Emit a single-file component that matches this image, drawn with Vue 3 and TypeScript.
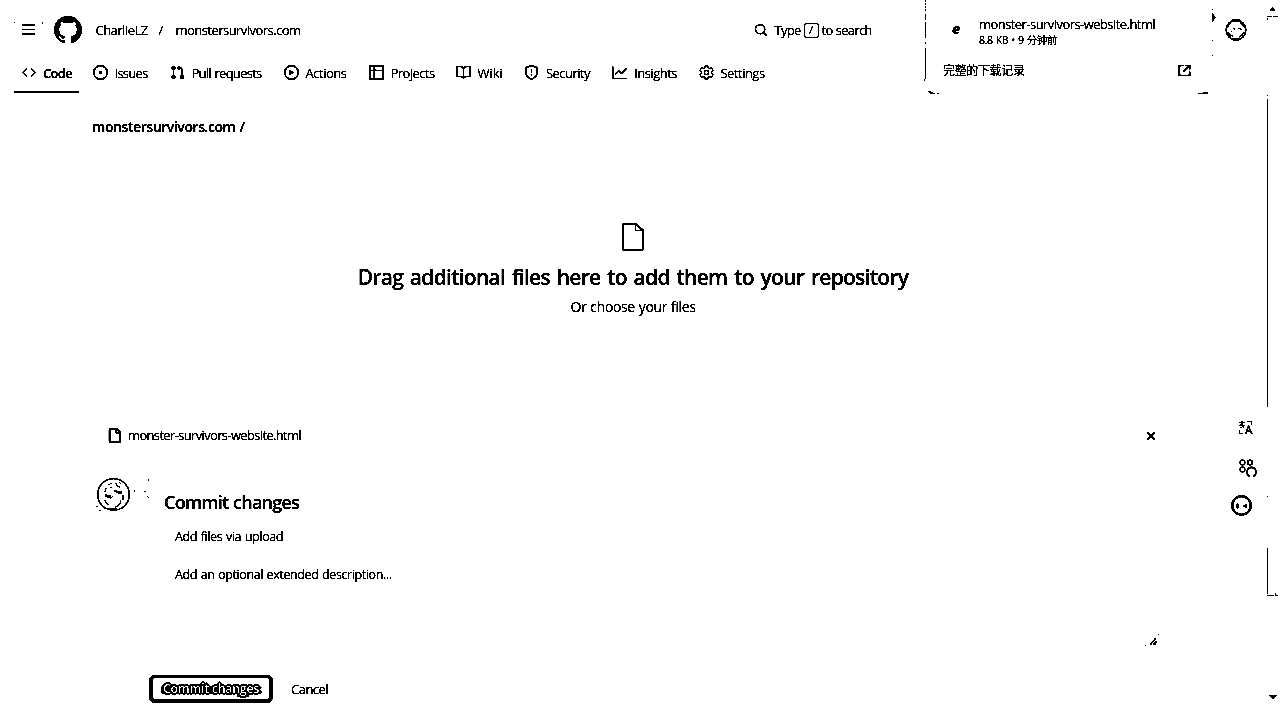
<script setup lang="ts">
interface Tab {
  label: string
  width: number
  paths: string[]
}

/* Tunes the tracking of a label so that it fills the given width. */
const vFit = {
  mounted(el: HTMLElement, binding: { value: number }) {
    const count = (el.textContent ?? '').length
    const range = document.createRange()
    range.selectNodeContents(el)
    const natural = range.getBoundingClientRect().width
    el.style.letterSpacing = `${((binding.value - 0.9 - natural) / count).toFixed(3)}px`
  },
}

const tabs: Tab[] = [
  { label: 'Code', width: 30, paths: ['m11.28 3.22 4.25 4.25a.75.75 0 0 1 0 1.06l-4.25 4.25a.749.749 0 0 1-1.275-.326.749.749 0 0 1 .215-.734L13.94 8l-3.72-3.72a.749.749 0 0 1 .326-1.275.749.749 0 0 1 .734.215Zm-6.56 0a.751.751 0 0 1 1.042.018.751.751 0 0 1 .018 1.042L2.06 8l3.72 3.72a.749.749 0 0 1-.326 1.275.749.749 0 0 1-.734-.215L.47 8.53a.75.75 0 0 1 0-1.06Z'] },
  { label: 'Issues', width: 34, paths: ['M8 9.5a1.5 1.5 0 1 0 0-3 1.5 1.5 0 0 0 0 3Z', 'M8 0a8 8 0 1 1 0 16A8 8 0 0 1 8 0ZM1.5 8a6.5 6.5 0 1 0 13 0 6.5 6.5 0 0 0-13 0Z'] },
  { label: 'Pull requests', width: 71, paths: ['M1.5 3.25a2.25 2.25 0 1 1 3 2.122v5.256a2.251 2.251 0 1 1-1.5 0V5.372A2.25 2.25 0 0 1 1.5 3.25Zm5.677-.177L9.573.677A.25.25 0 0 1 10 .854V2.5h1A2.5 2.5 0 0 1 13.5 5v5.628a2.251 2.251 0 1 1-1.5 0V5a1 1 0 0 0-1-1h-1v1.646a.25.25 0 0 1-.427.177L7.177 3.427a.25.25 0 0 1 0-.354Z'] },
  { label: 'Actions', width: 42, paths: ['M8 0a8 8 0 1 1 0 16A8 8 0 0 1 8 0ZM1.5 8a6.5 6.5 0 1 0 13 0 6.5 6.5 0 0 0-13 0Zm4.879-2.773 4.264 2.559a.25.25 0 0 1 0 .428l-4.264 2.559A.25.25 0 0 1 6 10.559V5.442a.25.25 0 0 1 .379-.215Z'] },
  { label: 'Projects', width: 45, paths: ['M0 1.75C0 .784.784 0 1.75 0h12.5C15.216 0 16 .784 16 1.75v12.5A1.75 1.75 0 0 1 14.25 16H1.75A1.75 1.75 0 0 1 0 14.25ZM6.5 6.5v8h7.75a.25.25 0 0 0 .25-.25V6.5Zm8-1.5V1.75a.25.25 0 0 0-.25-.25H6.5V5Zm-13 1.5v7.75c0 .138.112.25.25.25H5v-8ZM5 5V1.5H1.75a.25.25 0 0 0-.25.25V5Z'] },
  { label: 'Wiki', width: 26, paths: ['M0 1.75A.75.75 0 0 1 .75 1h4.253c1.227 0 2.317.59 3 1.501A3.743 3.743 0 0 1 11.006 1h4.245a.75.75 0 0 1 .75.75v10.5a.75.75 0 0 1-.75.75h-4.507a2.25 2.25 0 0 0-1.591.659l-.622.621a.75.75 0 0 1-1.06 0l-.622-.621A2.25 2.25 0 0 0 5.258 13H.75a.75.75 0 0 1-.75-.75Zm7.251 10.324.004-5.073-.002-2.253A2.25 2.25 0 0 0 5.003 2.5H1.5v9h3.757a3.75 3.75 0 0 1 1.994.574ZM8.755 4.75l-.004 7.322a3.752 3.752 0 0 1 1.992-.572H14.5v-9h-3.495a2.25 2.25 0 0 0-2.25 2.25Z'] },
  { label: 'Security', width: 45, paths: ['M7.467.133a1.748 1.748 0 0 1 1.066 0l5.25 1.68A1.75 1.75 0 0 1 15 3.48V7c0 1.566-.32 3.182-1.303 4.682-.983 1.498-2.585 2.813-5.032 3.855a1.697 1.697 0 0 1-1.33 0c-2.447-1.042-4.049-2.357-5.032-3.855C1.32 10.182 1 8.566 1 7V3.48a1.75 1.75 0 0 1 1.217-1.667Zm.61 1.429a.25.25 0 0 0-.153 0l-5.25 1.68a.25.25 0 0 0-.174.238V7c0 1.358.275 2.666 1.057 3.86.784 1.194 2.121 2.34 4.366 3.297a.196.196 0 0 0 .154 0c2.245-.956 3.582-2.104 4.366-3.298C13.225 9.666 13.5 8.36 13.5 7V3.48a.251.251 0 0 0-.174-.237l-5.25-1.68ZM8.75 4.75v3a.75.75 0 0 1-1.5 0v-3a.75.75 0 0 1 1.5 0ZM9 10.5a1 1 0 1 1-2 0 1 1 0 0 1 2 0Z'] },
  { label: 'Insights', width: 44, paths: ['M1.5 1.75V13.5h13.75a.75.75 0 0 1 0 1.5H.75a.75.75 0 0 1-.75-.75V1.75a.75.75 0 0 1 1.5 0Zm14.28 2.53-5.25 5.25a.75.75 0 0 1-1.06 0L7 7.06 4.28 9.78a.751.751 0 0 1-1.042-.018.751.751 0 0 1-.018-1.042l3.25-3.25a.75.75 0 0 1 1.06 0L10 7.94l4.72-4.72a.751.751 0 0 1 1.042.018.751.751 0 0 1 .018 1.042Z'] },
  { label: 'Settings', width: 45, paths: [] },
]

const filePath = 'M2 1.75C2 .784 2.784 0 3.75 0h6.586c.464 0 .909.184 1.237.513l2.914 2.914c.329.328.513.773.513 1.237v9.586A1.75 1.75 0 0 1 13.25 16h-9.5A1.75 1.75 0 0 1 2 14.25Zm1.75-.25a.25.25 0 0 0-.25.25v12.5c0 .138.112.25.25.25h9.5a.25.25 0 0 0 .25-.25V6h-2.75A1.75 1.75 0 0 1 9 4.25V1.5Zm6.75.062V4.25c0 .138.112.25.25.25h2.688l-.011-.013-2.914-2.914-.013-.011Z'
</script>

<template>
  <div class="page">
    <header class="topbar">
      <svg class="menu" viewBox="0 0 30 18"><path d="M8 4h13M8 13h13" stroke="#000" stroke-width="2" /><path d="M8 8.500h13" stroke="#000" /><path d="M0 1h1v1H0zM28 1h1v2h-1z" /></svg>
      <svg class="mark" viewBox="0 0 16 16"><path d="M8 0c4.42 0 8 3.58 8 8a8.013 8.013 0 0 1-5.45 7.59c-.4.08-.55-.17-.55-.38 0-.27.01-1.13.01-2.2 0-.75-.25-1.23-.54-1.48 1.78-.2 3.65-.88 3.65-3.95 0-.88-.31-1.59-.82-2.15.08-.2.36-1.02-.08-2.12 0 0-.67-.22-2.2.82-.64-.18-1.32-.27-2-.27-.68 0-1.36.09-2 .27-1.53-1.03-2.2-.82-2.2-.82-.44 1.1-.16 1.92-.08 2.12-.51.56-.82 1.28-.82 2.15 0 3.06 1.86 3.75 3.64 3.95-.23.2-.44.55-.51 1.07-.46.21-1.61.55-2.33-.66-.15-.24-.6-.83-1.23-.82-.67.01-.27.38.01.53.34.19.73.9.82 1.13.16.45.68 1.31 2.69.94 0 .67.01 1.3.01 1.49 0 .21-.15.45-.55.38A7.995 7.995 0 0 1 0 8c0-4.42 3.58-8 8-8Z" /></svg>
      <span class="crumb owner"><span v-fit="53">CharlieLZ</span></span>
      <span class="crumb slash">/</span>
      <span class="crumb repo"><span v-fit="126">monstersurvivors.com</span></span>
      <div class="search">
        <svg viewBox="0 0 16 16"><path d="M10.68 11.74a6 6 0 0 1-7.922-8.982 6 6 0 0 1 8.982 7.922l3.04 3.04a.749.749 0 0 1-.326 1.275.749.749 0 0 1-.734-.215ZM11.5 7a4.499 4.499 0 1 0-8.997 0A4.499 4.499 0 0 0 11.5 7Z" /></svg>
        <span class="type"><span v-fit="27">Type</span></span>
        <kbd>/</kbd>
        <span v-fit="51">to search</span>
      </div>
      <svg class="avatar-sm" viewBox="0 0 22 22" fill="none" stroke="#000">
        <circle cx="11" cy="11" r="9.900" stroke-width="1.300" />
        <path d="M7 1.500h8M8 20.500h6M9 21.500h4" stroke-width="2" />
        <path d="M3 6l3-3M2 8l2-2M15 3l3 3M17 5l3 4M8 9l2 1.500M13 9.500h3M15 10.500h2M3 13l2 3 3 1M3 15l3 3M14 18l3-2 2-3M6 12l1 1" stroke-width="1.100" />
      </svg>
    </header>

    <nav class="tabs">
      <a v-for="(tab, i) in tabs" :key="tab.label" class="tab" :class="{ active: i === 0 }">
        <svg v-if="tab.paths.length" viewBox="0 0 16 16"><path v-for="d in tab.paths" :key="d" :d="d" /></svg>
        <svg v-else viewBox="0 0 16 16" fill="none" stroke="#000" stroke-width="1.200">
          <path d="M6.600 1h2.800l.5 2 1.400.8 2-.7 1.600 2.500-1.500 1.500v1.800l1.500 1.500-1.600 2.500-2-.7-1.400.8-.5 2H6.600l-.5-2-1.400-.8-2 .7-1.600-2.500 1.500-1.500V7.100L1.100 5.600l1.600-2.500 2 .7L6.100 3Z" />
          <circle cx="8" cy="8" r="2.300" />
        </svg>
        <span v-fit="tab.width">{{ tab.label }}</span>
      </a>
    </nav>

    <main>
      <div class="path"><span v-fit="153.500">monstersurvivors.com /</span></div>
      <section class="drop">
        <svg viewBox="0 0 24 28" fill="none" stroke="#000" stroke-width="1.800">
          <path d="M3 1h12l7 6.500V25q0 2-2 2H3q-1 0-1-1V2q0-1 1-1Z" /><path d="M14.500 1.500v6h6.500" stroke-width="1" />
        </svg>
        <h1><span v-fit="551.500">Drag additional files here to add them to your repository</span></h1>
        <p><span v-fit="126">Or choose your files</span></p>
      </section>

      <div class="file-row">
        <svg class="file" viewBox="0 0 16 16"><path :d="filePath" stroke="#000" stroke-width=".3" /></svg>
        <span class="file-name"><span v-fit="174">monster-survivors-website.html</span></span>
        <svg class="close" viewBox="0 0 10 10"><path d="M1.500 1.500l7 7M8.500 1.500l-7 7" stroke="#000" stroke-width="1.300" /></svg>
      </div>

      <section class="commit">
        <svg class="avatar" viewBox="0 0 56 38" fill="none" stroke="#000">
          <circle cx="17.500" cy="18.500" r="15.800" stroke-width="1.300" />
          <path d="M12 9l4-2M20 7l1 3 3 1M23 6l2 2M10 12l-1 4M14 12l2-1M18 15h3M10 20h5M11 21h4M9 24l1 3 3 2M17 20l-3 3M24 24l1 2-3 4-3 1M27 19v5" stroke-width="1" />
          <path d="M20 15h6v3h-3l-3-2ZM9 18l3 1v3l-3-2Z" fill="#000" stroke="none" />
          <path d="M12 32.500h9M14 33.500h5M1 30v1M3 34l2 1M38 15h1M48 15l2 1M52 4h1M51 20l2 2" />
        </svg>
        <div class="form">
          <h2><span v-fit="136">Commit changes</span></h2>
          <div class="field one"><span v-fit="109">Add files via upload</span></div>
          <div class="field two"><span v-fit="217.500">Add an optional extended description...</span></div>
          <svg class="grip" viewBox="0 0 16 14"><path d="M5 12l6-7M8 12l4-4M10 12l1-1" stroke="#000" stroke-width="1.200" /><path d="M0 12h1v1H0zM13 1h1v1h-1z" /></svg>
        </div>
      </section>
      <div class="actions">
        <button class="primary"><span v-fit="97">Commit changes</span></button>
        <span class="cancel"><span v-fit="38">Cancel</span></span>
      </div>
    </main>

    <aside class="downloads">
      <div class="download">
        <b class="edge">e</b>
        <div class="info">
          <div class="name"><span v-fit="177">monster-survivors-website.html</span></div>
          <div class="meta"><span v-fit="79">8.8 KB • 9 分钟前</span></div>
        </div>
      </div>
      <div class="history">
        <span v-fit="82.500">完整的下载记录</span>
        <svg viewBox="0 0 14 14" fill="none" stroke="#000" stroke-width="1.600"><path d="M6 1.500H1.500v11h11V8M8 1.500h4.500V6M12.500 1.500L5.500 8.500" /></svg>
      </div>
      <svg class="frame" viewBox="0 0 292 96" fill="none" stroke="#000">
        <path d="M1.500 0v12" stroke-dasharray="2 1" /><path d="M1.500 14v6M1.500 22v16M1.500 42v2M1.500 48v31" /><path d="M.5 79v2M4 91.500h3M5 92.500h4M6 93.500h5M13 93.500h2M274 93.500h10M279 92.500h5" />
        <path d="M288.500 9v1M288.500 40v1M288.500 55v1" /><path d="M288 13l4 4.500-4 4.500Z" fill="#000" stroke="none" />
      </svg>
    </aside>

    <aside class="tools">
      <svg viewBox="0 0 28 96" fill="none" stroke="#000">
        <path d="M9 2.500h6M12 1v4M9 5.500h6M10 8l4-2M10 4l4 4M17 1.500h4.500V5M9.500 10v3.500h3" stroke-width=".900" />
        <path d="M15.500 14l3-8 3.500 8M17 11h4" stroke-width="1.200" />
        <g stroke-width="1.300"><circle cx="12.500" cy="42.500" r="2.300" /><circle cx="20" cy="42.500" r="2.300" /><circle cx="12.500" cy="49.500" r="2.300" /></g>
        <path d="M19.500 56.200a4.600 4.600 0 1 1 4 0" stroke-width="1.800" />
        <circle cx="11.500" cy="85.500" r="9.300" stroke-width="2.200" />
        <ellipse cx="7.500" cy="86" rx="1.400" ry="2.400" fill="#000" stroke="none" /><path d="M17 83.500v5l-4-2.500Z" fill="#000" stroke="none" />
      </svg>
    </aside>

    <svg class="scrollbar" viewBox="0 0 16 704" fill="none" stroke="#000">
      <path d="M5.500 11l3-4 3 4ZM5 695h8l-4 4Z" fill="#000" stroke="none" />
      <path d="M3.500 18v2M3 16.500h5M9 16.500h5M3.500 95v1M3.500 99v308M3.500 496v1M3.500 548v46M3 595.500h7M11.500 593v3M12 595.500h2" />
    </svg>
  </div>
</template>

<style>
html, body { margin: 0; background: #fff; overflow: hidden; }
</style>

<style scoped>
.page { position: relative; width: 1280px; height: 704px; overflow: hidden; background: #fff; color: #000; font: 400 13px/18px "Open Sans", "Noto Sans CJK SC", sans-serif; white-space: nowrap; word-spacing: .8px; filter: grayscale(1) brightness(.7) contrast(20); }
svg { display: block; flex: none; }
h1, h2, p { margin: 0; }
.topbar { display: flex; align-items: center; height: 60px; box-sizing: border-box; padding-left: 14px; }
.menu { width: 30px; height: 18px; }
.mark { width: 28px; height: 28px; margin-left: 10px; }
.crumb { height: 18px; }
.owner { width: 63px; margin-left: 13.500px; }
.slash { width: 17px; }
.repo { width: 578px; font-weight: 500; }
.search { display: flex; align-items: center; width: 471px; }
.search svg { width: 14px; height: 14px; margin-right: 7px; }
.type { width: 29px; }
kbd { box-sizing: border-box; width: 15px; height: 15px; margin: 1px 3px 0 0; border: 1px solid #000; border-radius: 3px; font: 11px/12px "Open Sans", sans-serif; text-align: center; }
.avatar-sm { width: 22px; height: 22px; }
.tabs { display: grid; grid-template-columns: 71px 77px 114px 85px 87px 68.500px 88px 86.500px 90px; height: 33px; padding-left: 21px; }
.tab { position: relative; display: flex; align-items: flex-start; gap: 7px; padding-top: 4px; }
.tab svg { width: 15px; height: 15px; margin: 1px 0 0 .5px; }
.tab:nth-child(1) svg { width: 14px; margin-right: .5px; }
.active { font-weight: 600; }
.active::after { content: ""; position: absolute; left: -7px; top: 31px; width: 65px; height: 2px; background: #000; }
main { display: flex; flex-direction: column; }
.path { height: 33px; margin: 24px 0 0 92px; font-size: 14px; line-height: 20px; font-weight: 600; }
.drop { display: flex; flex-direction: column; align-items: center; width: 1082px; height: 276px; margin-left: 92px; box-sizing: border-box; padding-top: 73px; }
.drop svg { width: 24px; height: 28px; }
h1 { margin-top: 11px; font-size: 21px; line-height: 30px; font-weight: 600; word-spacing: 2px; }
.drop p { margin-top: 5px; font-size: 14px; line-height: 20px; }
.file-row { display: flex; align-items: center; height: 18px; padding-left: 107px; }
.file { width: 15px; height: 15px; margin-right: 6px; }
.file-name { width: 1018px; }
.close { width: 10px; height: 10px; margin-top: 1px; }
.commit { display: flex; height: 200px; margin: 32px 0 0 96px; }
.avatar { width: 56px; height: 38px; }
.form { width: 1008px; padding: 14px 0 0 12px; }
h2 { font-size: 18px; line-height: 24px; font-weight: 600; }
.field { padding-left: 11px; font-size: 12.500px; }
.one { margin-top: 14px; }
.two { margin-top: 20px; }
.grip { width: 16px; height: 14px; margin: 49px 0 0 981px; }
.actions { display: flex; align-items: center; height: 28px; margin: -1px 0 0 149px; }
.primary { box-sizing: border-box; width: 124px; height: 28px; padding: 0; border: 4px solid #000; border-top-width: 3px; border-radius: 6px; background: #fff; color: #fff; font: 600 12.500px/18px "Open Sans", sans-serif; text-shadow: -1px -1px #000, 1px -1px #000, -1px 1px #000, 1px 1px #000, -2px 0 #000, 2px 0 #000, 0 -2px #000, 0 2px #000, -3px 1px #000, 3px 1px #000; }
.cancel { margin-left: 18px; }
.downloads { position: absolute; left: 924px; top: 0; width: 292px; height: 96px; background: #fff; }
.download { display: flex; padding-top: 16px; }
.edge { width: 27px; margin-left: 28px; padding-top: 4px; font: italic 800 14px/18px "Open Sans", sans-serif; }
.name { line-height: 17px; }
.meta { font-size: 10.500px; line-height: 15px; }
.history { display: flex; align-items: center; justify-content: space-between; height: 20px; padding: 13px 25px 0 19px; font-size: 12px; }
.history svg { width: 13px; height: 13px; margin-top: -1px; }
.frame { position: absolute; left: 0; top: 0; width: 292px; height: 96px; }
.tools { position: absolute; left: 1230px; top: 420px; }
.tools svg { width: 28px; height: 96px; }
.scrollbar { position: absolute; left: 1264px; top: 0; width: 16px; height: 704px; }
</style>
